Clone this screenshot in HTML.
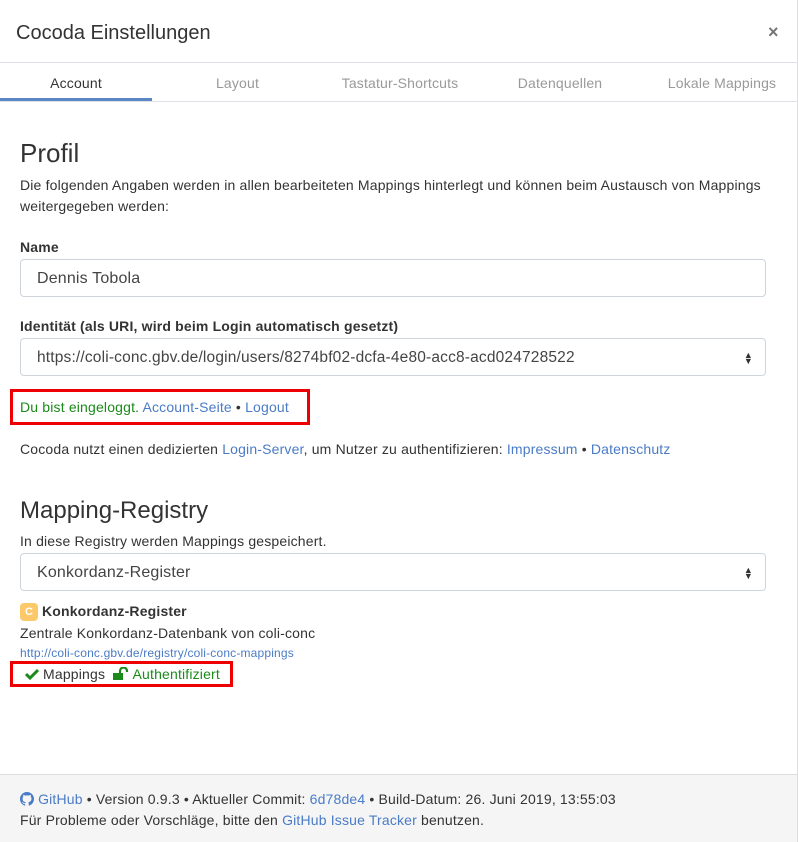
<!DOCTYPE html>
<html><head><meta charset="utf-8"><style>
*{box-sizing:border-box;margin:0;padding:0}
body{width:798px;height:842px;background:#fff;font-family:"Liberation Sans",sans-serif;color:#333;font-size:14px;position:relative;overflow:hidden;letter-spacing:0.17px}
.a{position:absolute;white-space:nowrap}
a{color:#4a7bc6;text-decoration:none}
.in{position:absolute;left:20px;width:746px;height:38px;border:1px solid #ced4da;border-radius:4px;padding:0 16px;line-height:38px;font-size:16px;color:#444}
.arr{position:absolute;right:12px;top:13px;font-size:9px;line-height:6px;color:#333}
.red{position:absolute;border:3px solid #e00}
.g{color:#1a8a1a}
</style></head><body>
<div style="position:absolute;right:0;top:0;width:1px;height:842px;background:#ddd"></div>
<div class="a" style="left:16px;top:22px;font-size:20px;color:#333;letter-spacing:0">Cocoda Einstellungen</div>
<div class="a" style="left:768px;top:22px;font-size:18px;font-weight:bold;color:#777">×</div>
<div class="a" style="left:0;top:62px;width:798px;height:1px;background:#dee2e6"></div>
<div class="a" style="left:0;top:101px;width:798px;height:1px;background:#dee2e6"></div>
<div class="a" style="left:0;top:98px;width:152px;height:3px;background:#5a86c6"></div>
<div class="a" style="left:0;top:75px;width:152px;text-align:center;color:#333">Account</div>
<div class="a" style="left:160px;top:75px;width:155px;text-align:center;color:#999">Layout</div>
<div class="a" style="left:320px;top:75px;width:160px;text-align:center;color:#999">Tastatur-Shortcuts</div>
<div class="a" style="left:480px;top:75px;width:160px;text-align:center;color:#999">Datenquellen</div>
<div class="a" style="left:640px;top:75px;width:164px;text-align:center;color:#999">Lokale Mappings</div>

<div class="a" style="left:20px;top:138px;font-size:26px;color:#333;letter-spacing:0">Profil</div>
<div class="a" style="left:20px;top:175px;line-height:21px">Die folgenden Angaben werden in allen bearbeiteten Mappings hinterlegt und können beim Austausch von Mappings<br>weitergegeben werden:</div>
<div class="a" style="left:20px;top:239px;font-weight:bold">Name</div>
<div class="in" style="top:259px">Dennis Tobola</div>
<div class="a" style="left:20px;top:318px;font-weight:bold">Identität (als URI, wird beim Login automatisch gesetzt)</div>
<div class="in" style="top:338px;font-size:15.5px">https://coli-conc.gbv.de/login/users/8274bf02-dcfa-4e80-acc8-acd024728522<div class="arr">▲<br>▼</div></div>
<div class="red" style="left:10px;top:389px;width:300px;height:36px"></div>
<div class="a" style="left:20px;top:399px"><span class="g">Du bist eingeloggt.</span> <a>Account-Seite</a> • <a>Logout</a></div>
<div class="a" style="left:20px;top:441px">Cocoda nutzt einen dedizierten <a>Login-Server</a>, um Nutzer zu authentifizieren: <a>Impressum</a> • <a>Datenschutz</a></div>

<div class="a" style="left:20px;top:497px;font-size:24px;letter-spacing:0">Mapping-Registry</div>
<div class="a" style="left:20px;top:533px">In diese Registry werden Mappings gespeichert.</div>
<div class="in" style="top:553px">Konkordanz-Register<div class="arr">▲<br>▼</div></div>
<div class="a" style="left:20px;top:603px;width:18px;height:18px;background:#fbc96a;border-radius:4px;color:#fff;font-size:11px;font-weight:bold;text-align:center;line-height:18px">C</div>
<div class="a" style="left:42px;top:603px;font-weight:bold">Konkordanz-Register</div>
<div class="a" style="left:20px;top:625px">Zentrale Konkordanz-Datenbank von coli-conc</div>
<div class="a" style="left:20px;top:646px;font-size:12px"><a>http://coli-conc.gbv.de/registry/coli-conc-mappings</a></div>
<div class="red" style="left:10px;top:661px;width:223px;height:26px"></div>
<div class="a" style="left:25px;top:666px"><svg width="14" height="12" viewBox="0 0 14 12" style="vertical-align:-1px"><path d="M1 6l4 4 8-8" stroke="#1a8a1a" stroke-width="3" fill="none"/></svg> Mappings &nbsp;<svg width="16" height="13" viewBox="0 0 16 13" style="vertical-align:-1px"><rect x="0" y="6" width="10" height="7" fill="#1a8a1a"/><path d="M7 6V4a3.5 3.5 0 0 1 7 0v1" stroke="#1a8a1a" stroke-width="2.2" fill="none"/></svg> <span class="g">Authentifiziert</span></div>

<div class="a" style="left:0;top:774px;width:797px;height:68px;background:#f5f5f5;border-top:1px solid #ddd"></div>
<div class="a" style="left:20px;top:791px"><svg width="14" height="14" viewBox="0 0 16 16" style="vertical-align:-2px"><path fill="#4a7bc6" d="M8 0C3.58 0 0 3.58 0 8c0 3.54 2.29 6.53 5.47 7.59.4.07.55-.17.55-.38v-1.33c-2.23.48-2.7-1.07-2.7-1.07-.36-.92-.89-1.17-.89-1.17-.73-.5.06-.49.06-.49.8.06 1.23.83 1.23.83.71 1.22 1.87.87 2.33.66.07-.52.28-.87.5-1.07-1.78-.2-3.64-.89-3.64-3.95 0-.87.31-1.59.82-2.15-.08-.2-.36-1.02.08-2.12 0 0 .67-.21 2.2.82a7.6 7.6 0 0 1 4 0c1.53-1.04 2.2-.82 2.2-.82.44 1.1.16 1.92.08 2.12.51.56.82 1.27.82 2.15 0 3.07-1.87 3.75-3.65 3.95.29.25.54.73.54 1.48v2.2c0 .21.15.46.55.38A8 8 0 0 0 16 8c0-4.42-3.58-8-8-8z"/></svg> <a>GitHub</a> • Version 0.9.3 • Aktueller Commit: <a>6d78de4</a> • Build-Datum: 26. Juni 2019, 13:55:03</div>
<div class="a" style="left:20px;top:812px">Für Probleme oder Vorschläge, bitte den <a>GitHub Issue Tracker</a> benutzen.</div>
</body></html>
